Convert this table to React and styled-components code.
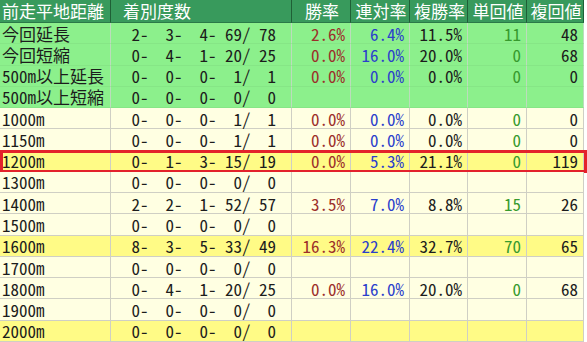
import React from "react";
import styled, { createGlobalStyle } from "styled-components";

const GlobalStyle = createGlobalStyle`
  html, body {
    margin: 0;
    padding: 0;
    background: #ffffff;
  }
`;

const columns = "111px 181px 59px 59px 58px 59px 57px";
const rowHeight = "calc((342px - 23px) / 15)";

const tones = {
  green: { bg: "#8cf08c", line: "#bcdcbc", bottom: "#86e686" },
  cream: { bg: "#ffffe2", line: "#cfcfc4", bottom: "#cfcfc4" },
  yellow: { bg: "#fffb86", line: "#cfcfc4", bottom: "#cfcfc4" },
};

const inks = {
  plain: "#1c1c1c",
  win: "#9c2f2a",
  ren: "#2b3fcc",
  tan: "#379a2e",
};

const zeros = "  0-  0-  0-  0/  0";

const rows = [
  { label: "今回延長", rec: "  2-  3-  4- 69/ 78", stats: ["2.6%", "6.4%", "11.5%", "11", "48"], tone: "green" },
  { label: "今回短縮", rec: "  0-  4-  1- 20/ 25", stats: ["0.0%", "16.0%", "20.0%", "0", "68"], tone: "green" },
  { label: "500m以上延長", rec: "  0-  0-  0-  1/  1", stats: ["0.0%", "0.0%", "0.0%", "0", "0"], tone: "green" },
  { label: "500m以上短縮", rec: zeros, stats: [], tone: "green" },
  { label: "1000m", rec: "  0-  0-  0-  1/  1", stats: ["0.0%", "0.0%", "0.0%", "0", "0"], tone: "cream" },
  { label: "1150m", rec: "  0-  0-  0-  1/  1", stats: ["0.0%", "0.0%", "0.0%", "0", "0"], tone: "cream" },
  { label: "1200m", rec: "  0-  1-  3- 15/ 19", stats: ["0.0%", "5.3%", "21.1%", "0", "119"], tone: "yellow", marked: true },
  { label: "1300m", rec: zeros, stats: [], tone: "cream" },
  { label: "1400m", rec: "  2-  2-  1- 52/ 57", stats: ["3.5%", "7.0%", "8.8%", "15", "26"], tone: "cream" },
  { label: "1500m", rec: zeros, stats: [], tone: "cream" },
  { label: "1600m", rec: "  8-  3-  5- 33/ 49", stats: ["16.3%", "22.4%", "32.7%", "70", "65"], tone: "yellow" },
  { label: "1700m", rec: zeros, stats: [], tone: "cream" },
  { label: "1800m", rec: "  0-  4-  1- 20/ 25", stats: ["0.0%", "16.0%", "20.0%", "0", "68"], tone: "cream" },
  { label: "1900m", rec: zeros, stats: [], tone: "cream" },
  { label: "2000m", rec: zeros, stats: [], tone: "yellow" },
];

const statInks = ["win", "ren", "plain", "tan", "plain"];

export default function App() {
  return (
    <>
      <GlobalStyle />
      <StyledTable>
        <StyledHeadRow>
          <StyledHeadCell>前走平地距離</StyledHeadCell>
          <StyledHeadCell $pad="12px">着別度数</StyledHeadCell>
          <StyledHeadCell $center>勝率</StyledHeadCell>
          <StyledHeadCell $center>連対率</StyledHeadCell>
          <StyledHeadCell $center>複勝率</StyledHeadCell>
          <StyledHeadCell $center>単回値</StyledHeadCell>
          <StyledHeadCell $center>複回値</StyledHeadCell>
        </StyledHeadRow>
        {rows.map((row) => (
          <StyledRow key={row.label} $tone={row.tone}>
            <StyledCell $tone={row.tone}>{row.label}</StyledCell>
            <StyledCell $tone={row.tone} $pre>{row.rec}</StyledCell>
            {statInks.map((ink, i) => (
              <StyledCell key={ink + i} $tone={row.tone} $ink={ink} $num>
                {row.stats[i] || ""}
              </StyledCell>
            ))}
            {row.marked && <StyledMark />}
          </StyledRow>
        ))}
      </StyledTable>
    </>
  );
}

const StyledTable = styled.div`
  width: 584px;
  display: flex;
  flex-direction: column;
  font-family: "Noto Sans CJK JP", "DejaVu Sans Mono", monospace;
  font-feature-settings: "hwid" 1;
  font-size: 17px;
  line-height: 19px;
  color: ${inks.plain};
`;

const StyledHeadRow = styled.div`
  display: grid;
  grid-template-columns: ${columns};
  height: 23px;
  background: #389a5c;
`;

const StyledHeadCell = styled.div`
  box-sizing: border-box;
  height: 23px;
  display: flex;
  align-items: center;
  justify-content: ${(p) => (p.$center ? "center" : "flex-start")};
  padding: 0 0 1px ${(p) => p.$pad || "2px"};
  color: #ffffff;
  white-space: nowrap;
  border-right: 1px solid #1f5f36;
  border-bottom: 1px solid #2a7a48;
`;

const StyledRow = styled.div`
  position: relative;
  display: grid;
  grid-template-columns: ${columns};
  height: ${rowHeight};
  background: ${(p) => tones[p.$tone].bg};
`;

const StyledCell = styled.div`
  box-sizing: border-box;
  height: 100%;
  display: flex;
  align-items: center;
  justify-content: ${(p) => (p.$num ? "flex-end" : "flex-start")};
  padding: ${(p) => (p.$num ? "0 5px 0 0" : p.$pre ? "0 0 0 3.5px" : "0 0 0 2px")};
  white-space: pre;
  color: ${(p) => inks[p.$ink || "plain"]};
  border-right: 1px solid ${(p) => tones[p.$tone].line};
  border-bottom: 1px solid ${(p) => tones[p.$tone].bottom};
`;

const StyledMark = styled.div`
  position: absolute;
  left: 0;
  right: -3px;
  top: -1px;
  bottom: -1px;
  border: 3px solid #e3222b;
  pointer-events: none;
`;
